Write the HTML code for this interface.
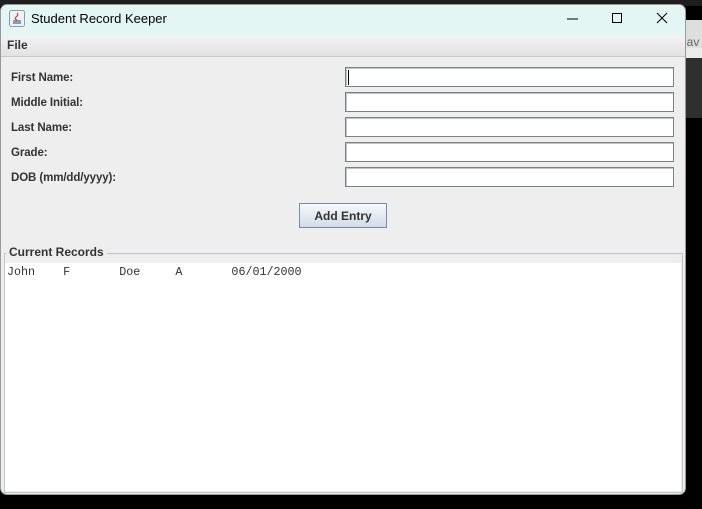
<!DOCTYPE html>
<html><head><meta charset="utf-8"><style>
*{margin:0;padding:0;box-sizing:border-box}
body{width:702px;height:509px;background:#000;position:relative;overflow:hidden;font-family:"Liberation Sans",Arial,sans-serif}
.topbg{position:absolute;left:0;top:0;width:702px;height:6px;background:#1e1e1e}
.rs1{position:absolute;left:684px;top:20px;width:18px;height:28px;background:#dedede;color:#666;font-size:12px;line-height:44px;overflow:hidden}
.rs2{position:absolute;left:684px;top:48px;width:18px;height:10px;background:#ececec}
.rs3{position:absolute;left:684px;top:58px;width:18px;height:60px;background:#2f2f2f}
.win{position:absolute;left:0;top:4px;width:686px;height:491px;background:#eeeeee;border-radius:7px;overflow:hidden;border:1px solid #999}
.title{position:absolute;left:0;top:0;width:100%;height:30px;background:#e4f6f4;font-size:13px;color:#000}
.title .t{position:absolute;left:30px;top:6px}
.menu{position:absolute;left:0;top:30px;width:100%;height:22px;background:linear-gradient(#f3f3f3,#e2e2e2);border-bottom:1px solid #c8c8c8;font-size:12px;font-weight:bold;color:#333}
.menu span{position:absolute;left:6px;top:3px}
.lbl{position:absolute;left:10px;font-size:11.5px;font-weight:bold;color:#333;letter-spacing:-0.1px}
.fld{position:absolute;left:344px;width:329px;height:20px;background:#fff;border:1px solid #7a8188;box-shadow:inset 1px 1px 0 #c0c4c8}
.btn{position:absolute;left:298px;top:198px;width:88px;height:25px;border:1px solid #7a8aa0;background:linear-gradient(#f6f8fb,#d2dce8);font-size:12px;font-weight:bold;color:#333;text-align:center;line-height:25px}
.group{position:absolute;left:3px;top:248px;width:679px;height:240px;border:1px solid #b8c4d0}
.gt{position:absolute;left:1px;top:-9px;background:#eeeeee;padding:0 3px;font-size:12px;font-weight:bold;color:#333}
.ta{position:absolute;left:4px;top:258px;width:676px;height:228px;background:#fff;font-family:"Liberation Mono",monospace;font-size:11.7px;color:#333;white-space:pre;padding:2px 2px}
</style></head><body>
<div class="topbg"></div>
<div class="rs1">jav</div><div class="rs2"></div><div class="rs3"></div>
<div class="win">
 <div class="title">
  <svg style="position:absolute;left:8px;top:5px" width="17" height="18"><rect x="0.5" y="0.5" width="15" height="16" rx="2" fill="#eef2f6" stroke="#8a9aaa"/><path d="M8 3 Q10 5 7 7 Q5 9 8 10" stroke="#d04020" fill="none" stroke-width="1.2"/><path d="M4 11 H12 M4 13 H12" stroke="#4a6a9a" stroke-width="1.2"/></svg>
  <span class="t">Student Record Keeper</span>
  <svg style="position:absolute;left:560px;top:7px" width="110" height="14"><line x1="6" y1="7" x2="17" y2="7" stroke="#000" stroke-width="1"/><rect x="51.5" y="1.5" width="9" height="9" fill="none" stroke="#000"/><path d="M96 1 L106 11 M106 1 L96 11" stroke="#000"/></svg>
 </div>
 <div class="menu"><span>File</span></div>
 <div class="lbl" style="top:67px">First Name:</div>
 <div class="lbl" style="top:92px">Middle Initial:</div>
 <div class="lbl" style="top:117px">Last Name:</div>
 <div class="lbl" style="top:142px">Grade:</div>
 <div class="lbl" style="top:167px">DOB (mm/dd/yyyy):</div>
 <div class="fld" style="top:62px"><div style="position:absolute;left:2px;top:2px;width:1px;height:15px;background:#000"></div></div>
 <div class="fld" style="top:87px"></div>
 <div class="fld" style="top:112px"></div>
 <div class="fld" style="top:137px"></div>
 <div class="fld" style="top:162px"></div>
 <div class="btn">Add Entry</div>
 <div class="group"><div class="gt">Current Records</div></div>
 <div class="ta">John    F       Doe     A       06/01/2000</div>
</div>
</body></html>
